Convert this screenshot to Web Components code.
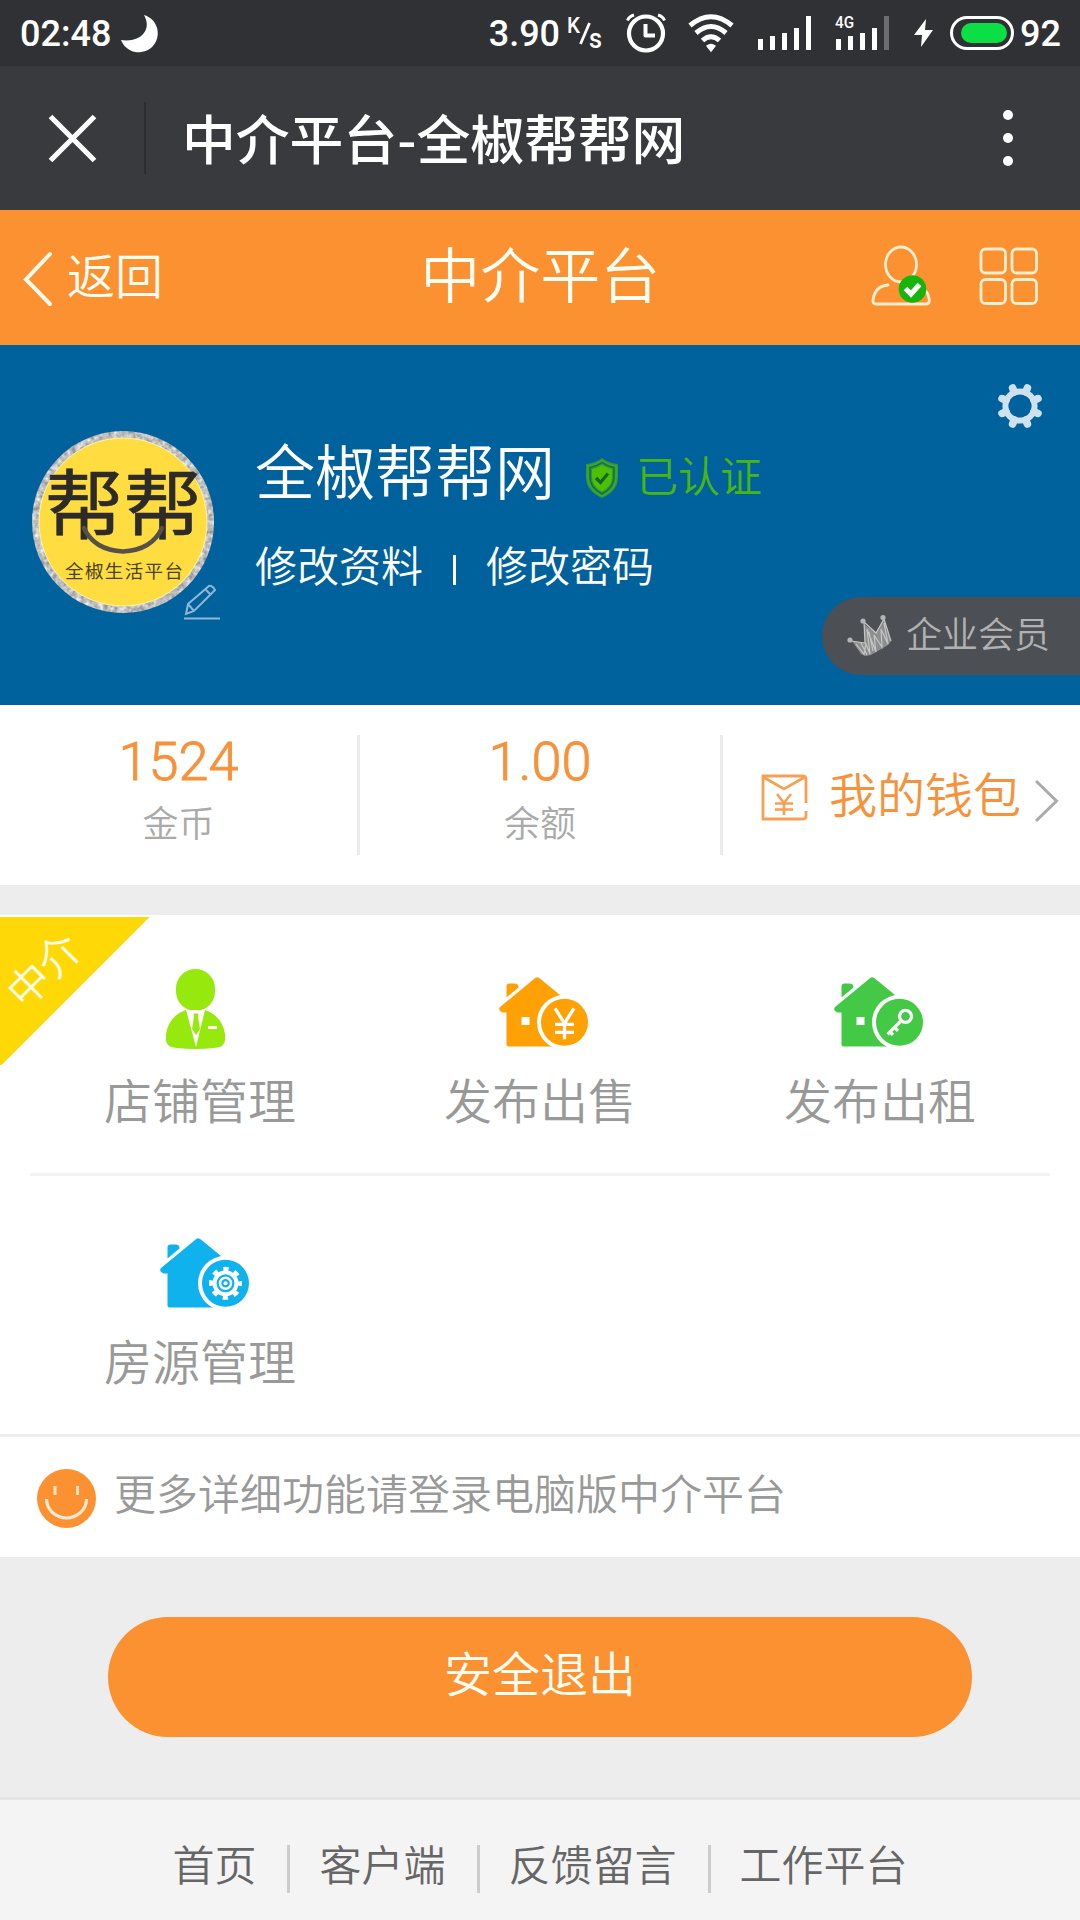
<!DOCTYPE html>
<html lang="zh-CN">
<head>
<meta charset="utf-8">
<title>中介平台-全椒帮帮网</title>
<style>
html,body{margin:0;padding:0}
body{width:1080px;height:1920px;overflow:hidden;background:#ededed;font-family:"Noto Sans CJK SC","Noto Sans",sans-serif;font-weight:350;color:#999}
</style>
</head>
<body>
<app-screen></app-screen>
<script>
const define = (name, html) => {
  const tpl = document.createElement('template');
  tpl.innerHTML = '<style>*{box-sizing:border-box}svg{display:block;flex:none;overflow:visible}:host{box-sizing:border-box}</style>' + html;
  customElements.define(name, class extends HTMLElement {
    constructor() {
      super();
      this.attachShadow({ mode: 'open' }).appendChild(tpl.content.cloneNode(true));
    }
  });
};

define('status-bar', `
<style>
:host{display:flex;align-items:center;justify-content:space-between;height:66px;background:#303134;color:#fff;padding:0 19px 0 20px;font:500 36px/66px Roboto,sans-serif}
.g{display:flex;align-items:center;height:66px}
.g>span{padding-top:2px}
</style>
<div class="g"><span>02:48</span>
<svg style="margin-left:10px;margin-top:2px" width="38" height="38" viewBox="0 0 38 38"><path d="M23 0A19 19 0 1 1 0 25C18 28 32 16 23 0Z" fill="#fff"/></svg></div>
<div class="g"><span>3.90</span>
<svg style="margin-left:7px" width="38" height="40" viewBox="0 0 38 40"><g fill="#fff" font-family="Roboto" font-weight="500"><text x="0" y="20" font-size="22" textLength="13" lengthAdjust="spacingAndGlyphs">K</text><text x="22" y="35" font-size="27" textLength="13" lengthAdjust="spacingAndGlyphs">s</text></g><path d="M22.500 10L13.500 31" stroke="#fff" stroke-width="2.800"/></svg>
<svg style="margin-left:21px" width="40" height="40" viewBox="0 0 40 40" fill="none" stroke="#fff"><circle cx="20" cy="20.500" r="17" stroke-width="4.200"/><path d="M19.500 11V22.500H29" stroke-width="4" stroke-linejoin="round"/><path d="M1.500 7.500Q3 3.500 8 2M38.500 7.500Q37 3.500 32 2" stroke-width="3"/></svg>
<svg style="margin-left:22px" width="46" height="40" viewBox="0 0 46 40" fill="none" stroke="#fff" stroke-width="5"><path d="M2 12.500Q23-5 44 12.500"/><path d="M8 20Q23 7 38 20"/><path d="M14.500 27.500Q23 20 31.500 27.500"/><path d="M19 33Q23 30 27 33L23 38Z" fill="#fff" stroke-width="1.500"/></svg>
<svg style="margin-left:24px" width="54" height="36" viewBox="0 0 54 36" fill="#fff"><path d="M0 24h5v11H0zM12 21h5v14h-5zM24 18h5v17h-5zM36 13h5v22h-5zM48 1h5v34h-5z"/></svg>
<svg style="margin-left:22px" width="56" height="36" viewBox="0 0 56 36" fill="#fff"><path d="M2 24h5v11H2zM14 21h5v14h-5zM26 18h5v17h-5zM38 13h5v22h-5z"/><path d="M50 1h5v34h-5z" fill="#6c6d70"/><text x="1" y="13" font-size="17" font-family="Roboto" font-weight="500" textLength="19" lengthAdjust="spacingAndGlyphs">4G</text></svg>
<svg style="margin-left:24px" width="20" height="28" viewBox="0 0 20 28"><path d="M12 0L0 16H8L7 28L19 11H11Z" fill="#fff"/></svg>
<svg style="margin-left:16px" width="64" height="36" viewBox="0 0 64 36"><rect x="1.500" y="2.500" width="61" height="31" rx="15.500" fill="none" stroke="#fff" stroke-width="3"/><rect x="11" y="8" width="46" height="20" rx="10" fill="#0bdf45"/></svg>
<span style="margin-left:6px">92</span></div>`);

define('nav-bar', `
<style>
:host{display:flex;align-items:center;height:144px;background:#393a3e;color:#fff;padding:0 67px 0 48px}
.d{width:2px;height:72px;background:#2c2d30;margin:0 36px 0 47px}
.t{flex:1;font-weight:500;font-size:53.800px;line-height:80px;padding-bottom:3px}
</style>
<svg width="49" height="49" viewBox="0 0 49 49"><path d="M2.500 2.500L46.500 46.500M46.500 2.500L2.500 46.500" stroke="#fff" stroke-width="5.200"/></svg>
<div class="d"></div><div class="t"><slot></slot></div>
<svg width="10" height="58" viewBox="0 0 10 58" fill="#fff"><circle cx="5" cy="6" r="5"/><circle cx="5" cy="29" r="5"/><circle cx="5" cy="52" r="5"/></svg>`);

define('page-header', `
<style>
:host{display:grid;grid-template-columns:1fr auto 1fr;align-items:center;height:135px;background:#fb9131;color:#fffdf2;padding:0 42.500px 0 22px}
.b{display:flex;align-items:center;font-size:48px;line-height:70px;gap:14px}
.b svg{margin-top:2px}
.b span{padding-bottom:10px}
.t{font-size:60px;line-height:90px;padding-bottom:12px;margin-left:21px}
.r{display:flex;justify-content:flex-end;gap:47.500px;align-items:center;padding-bottom:4px}
</style>
<div class="b"><svg width="31" height="56" viewBox="0 0 31 56"><path d="M28 3L4 28.500L28 53" fill="none" stroke="#fffae8" stroke-width="4" stroke-linecap="round"/></svg><span>返回</span></div>
<div class="t"><slot></slot></div>
<div class="r">
<svg width="60" height="60" viewBox="0 0 60 60" fill="none" stroke="#ffeed0" stroke-width="2.800"><ellipse cx="30" cy="18.500" rx="15.500" ry="17.500"/><path d="M17 39Q4 40 2 54Q1.500 58 5 58H55Q59.500 58 58 52Q57 47 54 44" stroke-linecap="round"/><circle cx="41.500" cy="43" r="13.800" fill="#17b50c" stroke="none"/><path d="M34.500 42.500L40 48L48.500 38.500" stroke="#fff" stroke-width="5"/></svg>
<svg width="59" height="58" viewBox="0 0 59 58" fill="none" stroke="#ffeed0" stroke-width="2.800"><rect x="2" y="2" width="24.500" height="24" rx="4.500"/><rect x="33" y="2" width="24.500" height="24" rx="4.500"/><rect x="2" y="32.500" width="24.500" height="24" rx="4.500"/><rect x="33" y="32.500" width="24.500" height="24" rx="4.500"/></svg>
</div>`);

define('user-avatar', `
<style>:host{display:block;width:192px;height:192px}</style>
<svg width="192" height="192" viewBox="0 0 192 192">
<defs><filter id="n" x="0" y="0" width="1" height="1" color-interpolation-filters="sRGB"><feTurbulence type="fractalNoise" baseFrequency=".22" numOctaves="2" seed="4"/><feColorMatrix values="0.6 0 0 0 .45  0.6 0 0 0 .45  0.6 0 0 0 .45  0 0 0 0 1"/><feComposite in2="SourceGraphic" operator="in"/></filter></defs>
<circle cx="92" cy="92" r="91" fill="#bbb" filter="url(#n)"/>
<circle cx="92" cy="92" r="84" fill="#ffdd41" stroke="#fff2b0" stroke-width="1"/>
<text x="14" y="103" font-size="76" font-weight="400" textLength="157" lengthAdjust="spacingAndGlyphs" fill="#2d2b28" stroke="#2d2b28" stroke-width=".6" stroke-linejoin="round" font-family="Noto Sans CJK SC">帮帮</text>
<path d="M53 98Q63 120 92 121.500Q121 120 131 98" fill="none" stroke="#55504a" stroke-width="4.500" stroke-linecap="round"/>
<text x="34" y="148" font-size="18.500" font-weight="400" fill="#4a4320" font-family="Noto Sans CJK SC" textLength="118">全椒生活平台</text>
<g fill="none" stroke="#8fb6d3" stroke-width="2"><path d="M155 184L157 174L178 156Q181 155 184 160L163 181ZM157 174L163 181M174 159L180 165"/><path d="M153 188.500H189"/></g>
</svg>`);

define('member-badge', `
<style>
:host{display:flex;align-items:center;width:258px;height:78px;border-radius:39px 0 0 39px;background:#4c4f54;color:#b0b1b2;font-size:36px;line-height:52px;padding-left:25px;gap:14px}
span{padding-bottom:8px}
</style>
<svg width="45" height="42" viewBox="0 0 45 42"><path d="M5 26L18 28L17 9L29 18L37 4L44 26L41 30L24 40L18 41L14 39Z" fill="#8d8e90"/><g fill="none" stroke="#c4c5c5" stroke-width="1.200"><path d="M4 26L18 28L17 7L29 18L37 4L44 26M9 29L17 39L19 29L23 39L20 14L29 37L27 20L35 32L34 14L41 29L37 8M22 17L26 36M14 28L20 40"/></g><g fill="#b5b5b6"><circle cx="3" cy="25" r="2.600"/><circle cx="16" cy="6" r="2.600"/><circle cx="36" cy="2.600" r="2.600"/></g></svg>
<span><slot></slot></span>`);

define('user-hero', `
<style>
:host{display:flex;height:360px;background:#00629d;color:#fff;padding-left:31px;overflow:hidden}
user-avatar{margin-top:85px;flex:none}
.i{margin:79px 0 0 32px;flex:1}
.n{display:flex;align-items:center;font-size:60px;line-height:90px}
.n svg{margin:18px 17px 0 30px}
.c{font-size:42px;line-height:62px;color:#49b512;padding-top:9px}
.l{display:flex;align-items:center;font-size:42px;line-height:62px;margin-top:19px}
.l i{width:3px;height:30px;background:#fff;margin:12px 30px 0 30px}
.s{display:flex;flex-direction:column;align-items:flex-end;justify-content:space-between;width:258px;padding:38px 0 30px}
.s>svg{margin-right:37px}
</style>
<user-avatar></user-avatar>
<div class="i"><div class="n"><span>全椒帮帮网</span>
<svg width="34" height="42" viewBox="0 0 34 42"><path d="M17 1Q23 6 33 7V20Q33 34 17 41Q1 34 1 20V7Q11 6 17 1Z" fill="#319440"/><path d="M17 3.500Q23 8 31 9V20Q31 32 17 39Q3 32 3 20V9Q11 8 17 3.500Z" fill="none" stroke="#3fa62c" stroke-width="1.800"/><path d="M17 5.500Q22 9 29 10.500V20Q29 31 17 37Q5 31 5 20V10.500Q12 9 17 5.500Z" fill="none" stroke="#127048" stroke-width="1.500"/><path d="M17 8Q22 11 27 12V20Q27 29 17 34.500Q7 29 7 20V12Q12 11 17 8Z" fill="#4fc000"/><path d="M11 21L15.500 25.500L23 16.500" fill="none" stroke="#12662a" stroke-width="3.200"/></svg>
<span class="c">已认证</span></div>
<div class="l"><span>修改资料</span><i></i><span>修改密码</span></div></div>
<div class="s"><svg width="46" height="46" viewBox="-23 -23 46 46" fill="none" stroke="#cfe1ed"><circle r="14.600" stroke-width="6"/><path d="M5.700-13.900L7.400-18M13.900-5.700L18-7.400M13.900 5.700L18 7.400M5.700 13.900L7.400 18M-5.700 13.900L-7.400 18M-13.900 5.700L-18 7.400M-13.900-5.700L-18-7.400M-5.700-13.900L-7.400-18" stroke-width="7.600" stroke-linecap="round"/></svg>
<member-badge>企业会员</member-badge></div>`);

define('stat-item', `
<style>
:host{display:flex;flex-direction:column;align-items:center;height:120px;border-right:3px solid #ececec}
.v{font:300 54px/54px Roboto,sans-serif;color:#f7923a;-webkit-text-stroke:.9px #f7923a}
.k{font-size:36px;line-height:52px;color:#aaa;margin-top:6px}
</style><div class="v"><slot name="value"></slot></div><div class="k"><slot></slot></div>`);

define('wallet-bar', `
<style>
:host{display:flex;height:180px;background:#fff;padding-top:30px}
stat-item:nth-of-type(1){width:360px}
stat-item:nth-of-type(2){width:363px}
.w{flex:1;height:120px;display:flex;align-items:center;color:#f7923a;font-size:48px;line-height:70px;padding:4px 0 0 38px}
.w span{margin-left:21px;padding-bottom:11px}
.w svg:last-child{margin:8px 0 0 13px}
</style>
<stat-item><span slot="value">1524</span>金币</stat-item>
<stat-item><span slot="value">1.00</span>余额</stat-item>
<div class="w"><svg width="47" height="47" viewBox="0 0 47 47" fill="none" stroke="#f7a055" stroke-width="2.800"><path d="M45 29V5Q45 2 42 2H2V45H42Q45 45 45 42V37M2 3L23 15L44 3"/><path d="M16 20L23 29L30 20M23 29V41M14 29.500H32M14 35.500H32" stroke-width="2.600"/></svg><span>我的钱包</span>
<svg width="26" height="44" viewBox="0 0 26 44"><path d="M2 2L22.500 22L2 42" fill="none" stroke="#aaa" stroke-width="3"/></svg></div>`);

define('corner-ribbon', `
<style>
:host{display:block;position:absolute;left:0;top:2px;width:150px;height:148px;background:linear-gradient(135deg,#ffd907 0,#ffd907 50%,transparent 50.300%);color:#fffce8;padding-top:21px}
span{display:block;width:84px;font-size:42px;line-height:60px;text-align:center;transform:rotate(-45deg)}
</style><span><slot></slot></span>`);

const HOUSE = {
  coin: '<path d="M-9.500-14L0 1L9.500-14M0 0V17M-9.500 2H9.500M-9.500 10H9.500" fill="none" stroke="#fff" stroke-width="3.300"/>',
  key: '<circle cx="6" cy="-6" r="6" fill="none" stroke="#fff" stroke-width="3.300"/><path d="M1.500-1.500L-12 12M-9.500 9.500L-6.500 12.500M-5 5L-1.500 8.500" fill="none" stroke="#fff" stroke-width="3.300"/>',
  gear: '<g fill="none" stroke="#fff"><circle r="11" stroke-width="4"/><circle r="5.500" stroke-width="2.500"/><circle r="14" stroke-width="5" stroke-dasharray="5.200 5.796" stroke-dashoffset="2.600"/></g><circle r="2" fill="#fff"/>'
};
class FeatureItem extends HTMLElement {
  connectedCallback() {
    const kind = this.getAttribute('icon');
    const color = this.getAttribute('color');
    const person = `<g fill="${color}"><rect x="26" y="9" width="39" height="42" rx="19.500"/><path d="M36 50Q46 54 55 50Q72 56 75 74V80Q75 87 64 88Q45 90 27 88Q16 87 16 80V74Q19 56 36 50Z"/></g><path d="M36 50H55L46 87Z" fill="#fff"/><path d="M43.500 53.500H48.500L48 57L50 69L46 75L42 69L44 57Z" fill="${color}"/><rect x="58" y="66" width="9" height="3" fill="#fff"/>`;
    const house = `<g fill="${color}"><path d="M17 38V27Q17 24 20 24H25Q29 24 29 28L17 38Z"/><path d="M44.500 19.500Q47.500 16 51 19.500L93 54V87H19Q17 87 17 85V53H13Q8 51 10.500 47.500Z"/></g><path d="M72 36L100 25V95H65Z" fill="#fff"/><circle cx="75" cy="62.800" r="27.500" fill="#fff"/><circle cx="75" cy="62.800" r="23.500" fill="${color}"/>${kind === 'gear' ? '' : '<rect x="32" y="57.500" width="8" height="8" fill="#fff"/>'}<g transform="translate(75 62.800)">${HOUSE[kind]}</g>`;
    const box = { person: '0 0', coin: '0.5 0.5', key: '5.5 0.5', gear: '-0.5 0.5' }[kind];
    this.attachShadow({ mode: 'open' }).innerHTML = `
<style>
:host{display:flex;flex-direction:column;align-items:center;font-size:48px;line-height:70px;color:#999}
svg{display:block;margin-top:45px}
div{margin-top:3px}
</style>
<svg width="100" height="100" viewBox="${box} 100 100">${kind === 'person' ? person : house}</svg><div><slot></slot></div>`;
  }
}
customElements.define('feature-item', FeatureItem);

define('feature-grid', `
<style>
:host{display:block;position:relative;height:522px;background:#fff;padding:0 30px;border-bottom:3px solid #eee}
.r{display:grid;grid-template-columns:repeat(3,340px);height:261px}
.r:first-of-type{border-bottom:3px solid #f3f3f3}
</style>
<div class="r">
<feature-item icon="person" color="#96e80d">店铺管理</feature-item>
<feature-item icon="coin" color="#ffa005">发布出售</feature-item>
<feature-item icon="key" color="#43c945">发布出租</feature-item></div>
<div class="r"><feature-item icon="gear" color="#10b2ee">房源管理</feature-item></div>
<corner-ribbon>中介</corner-ribbon>`);

define('tip-row', `
<style>
:host{display:flex;align-items:center;height:120px;background:#fff;padding:3px 0 0 36px;font-size:42px;line-height:62px;color:#999}
span{margin-left:17px;padding-bottom:14px}
</style>
<svg width="61" height="60" viewBox="0 0 61 60"><circle cx="30.500" cy="29.500" r="29.500" fill="#fb9131"/><path d="M10.500 30A20 19 0 0 0 50.500 30" fill="none" stroke="#ffe9d2" stroke-width="3.200"/><path d="M19 17V26M41.500 17V26" stroke="#ffe3c8" stroke-width="3"/></svg><span><slot></slot></span>`);

define('logout-button', `
<style>
:host{display:flex;height:240px;padding:60px 108px;background:#ededed}
button{all:unset;flex:1;height:120px;box-sizing:border-box;border-radius:60px;background:#fb9131;color:#fffdf2;font-size:48px;line-height:70px;text-align:center;padding-bottom:12px}
</style><button><slot></slot></button>`);

define('site-footer', `
<style>
:host{display:flex;justify-content:center;height:123px;background:#f4f4f4;border-top:3px solid #e4e4e4;color:#666;font-size:42px;line-height:62px;padding-top:32px}
span{height:62px}
i{width:3px;height:48px;background:#ccc;margin:13px 29px 0 31px}
</style><span>首页</span><i></i><span>客户端</span><i></i><span>反馈留言</span><i></i><span>工作平台</span>`);

define('app-screen', `
<style>:host{display:flex;flex-direction:column;width:1080px;height:1920px}feature-grid{margin-top:30px}:host>*{flex:none}</style>
<status-bar></status-bar>
<nav-bar>中介平台-全椒帮帮网</nav-bar>
<page-header>中介平台</page-header>
<user-hero></user-hero>
<wallet-bar></wallet-bar>
<feature-grid></feature-grid>
<tip-row>更多详细功能请登录电脑版中介平台</tip-row>
<logout-button>安全退出</logout-button>
<site-footer></site-footer>`);
</script>
</body>
</html>
